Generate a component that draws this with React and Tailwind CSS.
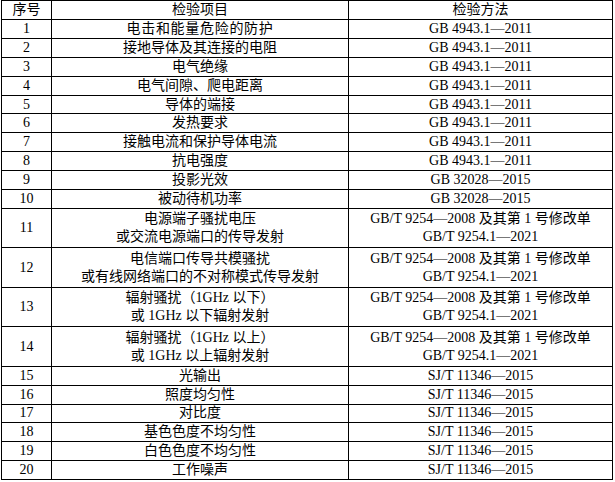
const GB4943 = "GB 4943.1—2011";
const GB32028 = "GB 32028—2015";
const SJT = "SJ/T 11346—2015";
const GB9254 = ["GB/T 9254—2008 及其第 1 号修改单", "GB/T 9254.1—2021"];

const rows = [
  { no: 1, item: ["电击和能量危险的防护"], method: [GB4943], wide: true },
  { no: 2, item: ["接地导体及其连接的电阻"], method: [GB4943] },
  { no: 3, item: ["电气绝缘"], method: [GB4943] },
  { no: 4, item: ["电气间隙、爬电距离"], method: [GB4943] },
  { no: 5, item: ["导体的端接"], method: [GB4943] },
  { no: 6, item: ["发热要求"], method: [GB4943] },
  { no: 7, item: ["接触电流和保护导体电流"], method: [GB4943] },
  { no: 8, item: ["抗电强度"], method: [GB4943] },
  { no: 9, item: ["投影光效"], method: [GB32028] },
  { no: 10, item: ["被动待机功率"], method: [GB32028] },
  { no: 11, item: ["电源端子骚扰电压", "或交流电源端口的传导发射"], method: GB9254 },
  { no: 12, item: ["电信端口传导共模骚扰", "或有线网络端口的不对称模式传导发射"], method: GB9254 },
  { no: 13, item: ["辐射骚扰（1GHz 以下）", "或 1GHz 以下辐射发射"], method: GB9254 },
  { no: 14, item: ["辐射骚扰（1GHz 以上）", "或 1GHz 以上辐射发射"], method: GB9254 },
  { no: 15, item: ["光输出"], method: [SJT] },
  { no: 16, item: ["照度均匀性"], method: [SJT] },
  { no: 17, item: ["对比度"], method: [SJT] },
  { no: 18, item: ["基色色度不均匀性"], method: [SJT] },
  { no: 19, item: ["白色色度不均匀性"], method: [SJT] },
  { no: 20, item: ["工作噪声"], method: [SJT] },
];

function Cell({ h, children, className = "" }) {
  return (
    <div className={`${h} border-r border-b border-black flex flex-col items-center justify-center leading-[18px] ${className}`}>
      {children}
    </div>
  );
}

function heightFor(row) {
  if (row.item.length > 1) return "h-[39.5px]";
  if (row.no > 14) return "h-[18.83px]";
  return "h-[18.9px]";
}

export default function App() {
  return (
    <div className="bg-white w-[615px] h-[482px]">
      <div className="ml-px w-[612px] grid grid-cols-[50px_297px_264px] border-l border-t border-black text-black text-[14px] font-['Liberation_Serif','Noto_Sans_CJK_SC',serif]">
        <Cell h="h-[19px]">序号</Cell>
        <Cell h="h-[19px]">检验项目</Cell>
        <Cell h="h-[19px]">检验方法</Cell>
        {rows.map((row) => {
          const h = heightFor(row);
          return [
            <Cell key={`n${row.no}`} h={h}>{row.no}</Cell>,
            <Cell key={`i${row.no}`} h={h} className={row.wide ? "tracking-[0.7px]" : ""}>
              {row.item.map((t) => <div key={t}>{t}</div>)}
            </Cell>,
            <Cell key={`m${row.no}`} h={h}>
              {row.method.map((t) => <div key={t}>{t}</div>)}
            </Cell>,
          ];
        })}
      </div>
    </div>
  );
}
